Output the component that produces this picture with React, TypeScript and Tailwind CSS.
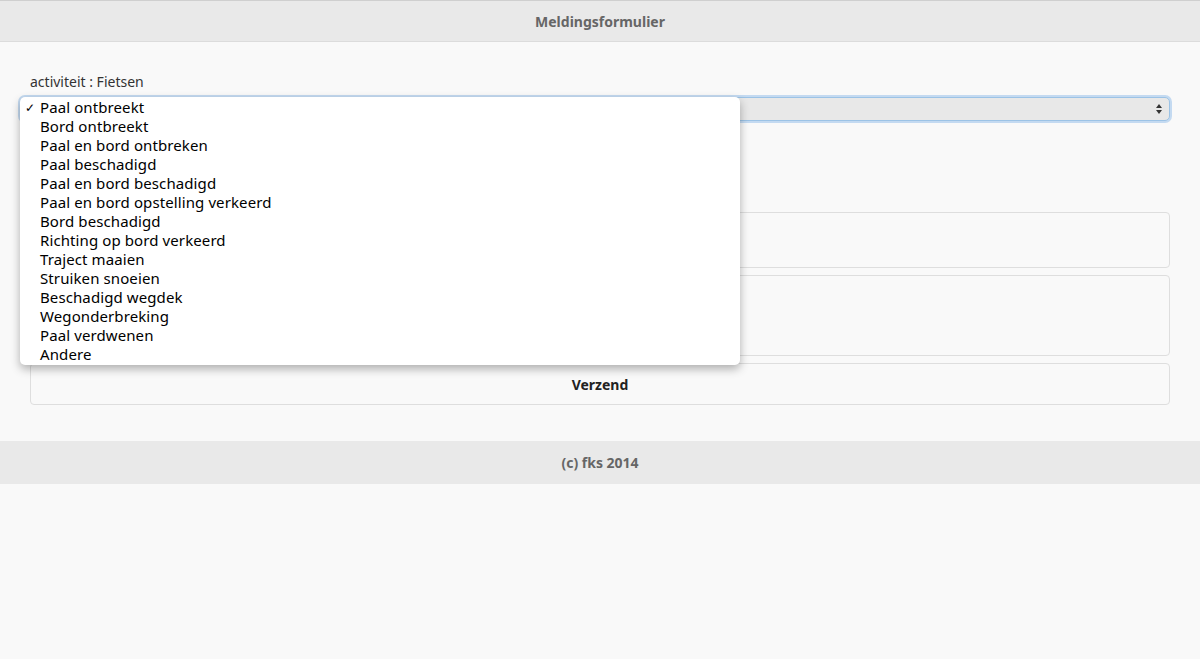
import React from 'react';

const OPTIONS = [
  'Paal ontbreekt',
  'Bord ontbreekt',
  'Paal en bord ontbreken',
  'Paal beschadigd',
  'Paal en bord beschadigd',
  'Paal en bord opstelling verkeerd',
  'Bord beschadigd',
  'Richting op bord verkeerd',
  'Traject maaien',
  'Struiken snoeien',
  'Beschadigd wegdek',
  'Wegonderbreking',
  'Paal verdwenen',
  'Andere',
];

export default function App() {
  return (
    <div className="min-h-[659px] bg-[#f9f9f9] [font-family:'Liberation_Sans',Arial,sans-serif] text-[#333]">
      <header className="h-[42px] border-t border-b border-[#cfcfcf] border-b-[#dcdcdc] bg-[#e9e9e9] flex items-center justify-center text-[14px] font-bold text-[#666]">
        Meldingsformulier
      </header>

      <main className="px-[20px] pt-[30px] pb-[36px]">
        <div className="pl-[10px] text-[14px] text-[#333] h-[19px] leading-[19px]">activiteit : Fietsen</div>

        <div className="relative mt-[6px]">
          <div className="h-[24px] rounded-[5px] bg-[#e8e8e8] border border-[#9cc3e6] shadow-[0_0_0_2px_rgba(130,180,230,0.45)] mr-[10px] flex items-center justify-end pr-[6px]">
            <svg width="8" height="12" viewBox="0 0 8 12"><path d="M4 1 L7 5 H1 Z M4 11 L7 7 H1 Z" fill="#333" /></svg>
          </div>

          <div className="absolute left-0 top-0 z-10 w-[720px] rounded-[5px] bg-white shadow-[0_4px_10px_rgba(0,0,0,0.3)] [font-family:'Noto_Sans',sans-serif] text-[15px] tracking-[0.1px] text-black py-[1px]">
            {OPTIONS.map((o, i) => (
              <div key={o} className="h-[19px] leading-[19px] flex">
                <span className="w-[20px] text-right pr-[5px] text-[12px]">{i === 0 ? '✓' : ''}</span>
                <span>{o}</span>
              </div>
            ))}
          </div>

          <div className="px-[10px]">
            <div className="h-[91px]" />
            <div className="h-[56px] rounded-[4px] border border-[#dedede] bg-[#f9f9f9]" />
            <div className="mt-[7px] h-[81px] rounded-[4px] border border-[#dedede] bg-[#f9f9f9]" />
            <button className="mt-[7px] w-full h-[42px] rounded-[4px] border border-[#dedede] bg-[#f9f9f9] text-[14px] font-bold text-[#222]">
              Verzend
            </button>
          </div>
        </div>
      </main>

      <footer className="h-[43px] bg-[#e9e9e9] flex items-center justify-center text-[14px] font-bold text-[#666]">
        (c) fks 2014
      </footer>
    </div>
  );
}
